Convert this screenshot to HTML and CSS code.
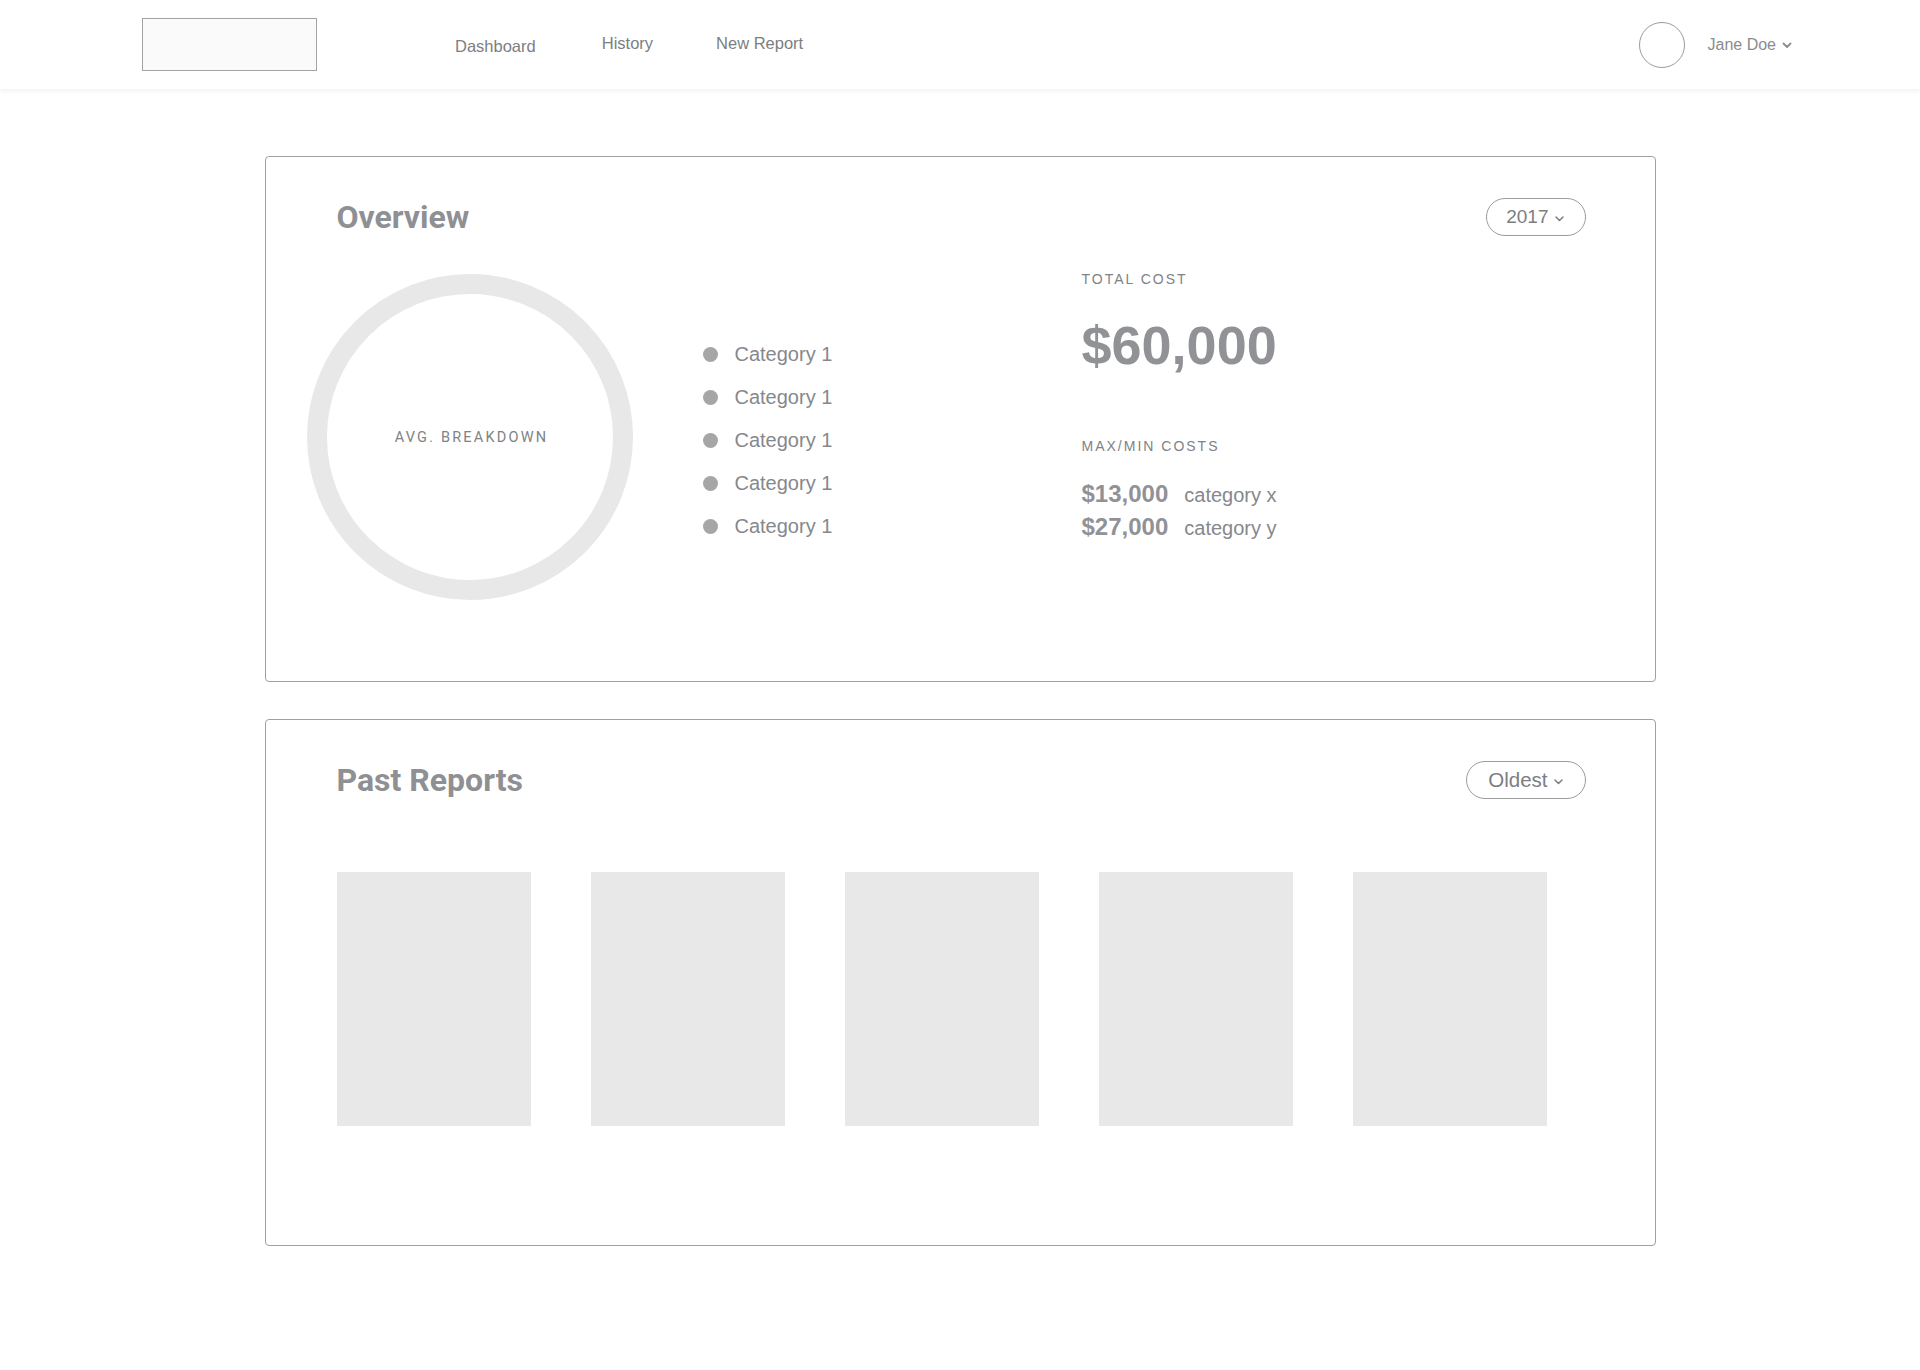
FILE: index.html
```html
<!DOCTYPE html>
<html lang="en">
<head>
  <meta charset="UTF-8" />
  <meta name="viewport" content="width=device-width, initial-scale=1" />
  <title>Dashboard</title>
  <link rel="stylesheet" href="styles.css">
</head>
<body>
  <header class="topbar">
    <div class="logo"></div>
    <nav class="nav">
      <a href="#" class="nav-link nav-link-low">Dashboard</a>
      <a href="#" class="nav-link">History</a>
      <a href="#" class="nav-link">New Report</a>
    </nav>
    <div class="user">
      <span class="avatar"></span>
      <span class="user-name">Jane Doe</span>
      <svg class="chev" width="10" height="7" viewBox="0 0 10 7"><path d="M1.5 1.5 L5 5 L8.5 1.5" fill="none" stroke="#8a8c90" stroke-width="1.8" stroke-linecap="round" stroke-linejoin="round"/></svg>
    </div>
  </header>

  <main class="page">
    <!-- overview -->
    <section class="card">
      <div class="card-head">
        <h2 class="card-title">Overview</h2>
        <button class="pill pill-year">2017 <svg width="9" height="6" viewBox="0 0 9 6"><path d="M1 1 L4.5 4.5 L8 1" fill="none" stroke="#7c7e82" stroke-width="1.5" stroke-linecap="round" stroke-linejoin="round"/></svg></button>
      </div>

      <div class="overview-body">
        <div class="donut">
          <span class="donut-label">AVG. BREAKDOWN</span>
        </div>

        <ul class="legend">
          <li><span class="dot"></span>Category 1</li>
          <li><span class="dot"></span>Category 1</li>
          <li><span class="dot"></span>Category 1</li>
          <li><span class="dot"></span>Category 1</li>
          <li><span class="dot"></span>Category 1</li>
        </ul>

        <div class="stats">
          <div class="stat-label">TOTAL COST</div>
          <div class="stat-total">$60,000</div>
          <div class="stat-label stat-label-gap">MAX/MIN COSTS</div>
          <div class="cost-row cost-row-first"><b>$13,000</b><span>category x</span></div>
          <div class="cost-row"><b>$27,000</b><span>category y</span></div>
        </div>
      </div>
    </section>

    <!-- past reports -->
    <section class="card">
      <div class="card-head">
        <h2 class="card-title">Past Reports</h2>
        <button class="pill">Oldest <svg width="9" height="6" viewBox="0 0 9 6"><path d="M1 1 L4.5 4.5 L8 1" fill="none" stroke="#7c7e82" stroke-width="1.5" stroke-linecap="round" stroke-linejoin="round"/></svg></button>
      </div>

      <div class="reports">
        <div class="report"></div>
        <div class="report"></div>
        <div class="report"></div>
        <div class="report"></div>
        <div class="report"></div>
      </div>
    </section>
  </main>
</body>
</html>
```

FILE: styles.css
```css
body {
  font-family: "Liberation Sans", Arial, sans-serif;
  background-color: #fff;
  color: #8a8c90;
  margin: 0; padding: 0;
}
.topbar {
  height: 89px;
  display: flex;
  align-items: center;
  padding: 0 128px 0 142px;
  background: #fff;
  box-shadow: 0 2px 5px rgba(0,0,0,0.06);
}
.logo {
  width: 173px;
  height: 51px;
  background: #fafafa;
  border: 1px solid #a3a3a3;
}
.nav {
  display: flex;
  gap: 66px;
  margin-left: 138px;
  padding-top: 1px;
}
.nav-link {
  color: #7c7e82;
  text-decoration: none;
  font-size: 16.5px;
}
.nav-link:last-child {
  margin-left: -3px;
}
.nav-link-low {
  margin-top: 2.5px;
}
.user {
  margin-left: auto;
  display: flex;
  align-items: center;
}
.avatar {
  width: 44px;
  height: 44px;
  border: 1.5px solid #9a9a9a;
  border-radius: 50%;
  margin-right: 23px;
}
.user-name {
  font-size: 16px;
  color: #8a8c90;
  margin-right: 6px;
}
.chev {
  display: block;
  margin-top: 2px;
}

.page {
  width: 1391px;
  margin: 67px auto 0;
}
.card {
  border: 1px solid #a0a0a0;
  border-radius: 4px;
  margin-bottom: 37px;
  box-sizing: border-box;
}
.card-head {
  display: flex;
  justify-content: space-between;
  align-items: center;
  height: 38px;
  padding: 41px 69px 0 71px;
}
.card-title {
  margin: 0;
  font-family: Roboto, sans-serif;
  font-weight: 700;
  font-size: 32px;
  color: #8e9094;
}
.pill {
  height: 38px;
  display: flex;
  align-items: center;
  gap: 6px;
  padding: 0 22px 0 21px;
  border: 1.5px solid #9c9c9c;
  border-radius: 19px;
  background: #fff;
  font-family: "Liberation Sans", Arial, sans-serif;
  font-size: 20.5px;
  color: #7c7e82;
  cursor: pointer;
}
.pill-year {
  font-size: 19px;
  padding: 0 21px 0 19px;
}
.pill svg {
  margin-top: 3px;
}

/* overview */
.overview-body {
  display: flex;
  align-items: flex-start;
  padding: 33px 0 81px 41px;
}
.donut {
  width: 326px;
  height: 326px;
  margin-top: 5px;
  box-sizing: border-box;
  border: 20px solid #e8e8e8;
  border-radius: 50%;
  display: flex;
  align-items: center;
  justify-content: center;
}
.donut-label {
  font-family: Roboto, sans-serif;
  font-size: 14.5px;
  letter-spacing: 2.2px;
  padding-left: 4px;
  color: #808286;
}
.legend {
  list-style: none;
  margin: 64px 0 0 70px;
  padding: 0;
  width: 379px;
}
.legend li {
  display: flex;
  align-items: center;
  height: 43px;
  font-size: 20px;
  color: #86888c;
}
.dot {
  width: 15px;
  height: 15px;
  border-radius: 50%;
  background: #a6a6a6;
  margin-right: 17px;
}
.stats {
  display: flex;
  flex-direction: column;
}
.stat-label {
  font-size: 14px;
  line-height: 20px;
  letter-spacing: 2px;
  color: #808286;
}
.stat-label-gap {
  margin-top: 59px;
}
.stat-total {
  margin-top: 24px;
  font-size: 54px;
  line-height: 64px;
  font-weight: bold;
  color: #909296;
}
.cost-row {
  display: flex;
  align-items: baseline;
  height: 33px;
  line-height: 33px;
}
.cost-row-first {
  margin-top: 21px;
}
.cost-row b {
  font-size: 24px;
  color: #909296;
  margin-right: 16px;
}
.cost-row span {
  font-size: 20px;
  color: #86888c;
}

/* past reports */
.reports {
  display: flex;
  gap: 60px;
  padding: 73px 0 119px 71px;
}
.report {
  width: 194px;
  height: 254px;
  background: #e8e8e8;
}
```
